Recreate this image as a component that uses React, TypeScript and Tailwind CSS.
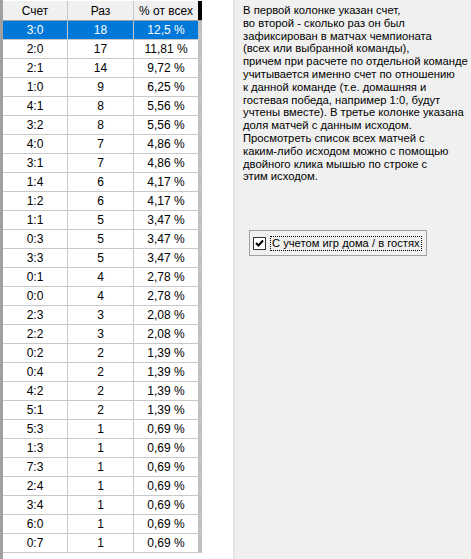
const rows: [string, string, string][] = [
  ["3:0", "18", "12,5 %"],
  ["2:0", "17", "11,81 %"],
  ["2:1", "14", "9,72 %"],
  ["1:0", "9", "6,25 %"],
  ["4:1", "8", "5,56 %"],
  ["3:2", "8", "5,56 %"],
  ["4:0", "7", "4,86 %"],
  ["3:1", "7", "4,86 %"],
  ["1:4", "6", "4,17 %"],
  ["1:2", "6", "4,17 %"],
  ["1:1", "5", "3,47 %"],
  ["0:3", "5", "3,47 %"],
  ["3:3", "5", "3,47 %"],
  ["0:1", "4", "2,78 %"],
  ["0:0", "4", "2,78 %"],
  ["2:3", "3", "2,08 %"],
  ["2:2", "3", "2,08 %"],
  ["0:2", "2", "1,39 %"],
  ["0:4", "2", "1,39 %"],
  ["4:2", "2", "1,39 %"],
  ["5:1", "2", "1,39 %"],
  ["5:3", "1", "0,69 %"],
  ["1:3", "1", "0,69 %"],
  ["7:3", "1", "0,69 %"],
  ["2:4", "1", "0,69 %"],
  ["3:4", "1", "0,69 %"],
  ["6:0", "1", "0,69 %"],
  ["0:7", "1", "0,69 %"],
];

const hint = [
  "В первой колонке указан счет,",
  "во второй - сколько раз он был",
  "зафиксирован в матчах чемпионата",
  "(всех или выбранной команды),",
  "причем при расчете по отдельной команде",
  "учитывается именно счет по отношению",
  "к данной команде (т.е. домашняя и",
  "гостевая победа, например 1:0, будут",
  "учтены вместе). В третье колонке указана",
  "доля матчей с данным исходом.",
  "Просмотреть список всех матчей с",
  "каким-либо исходом можно с помощью",
  "двойного клика мышью по строке с",
  "этим исходом.",
];

function ScoreGrid() {
  return (
    <div className="w-[235px] shrink-0 h-full bg-white border-l-[3px] border-l-[#a0a0a0] border-r-2 border-r-[#e3e3e3] flex flex-col">
      <div className="w-[199px] flex flex-col">
        <div className="flex h-[21px] bg-[#f0f0f0] border-t border-t-white border-b border-b-[#a0a0a0]">
          <div className="w-[65px] flex items-center justify-center border-r border-[#c8c8c8]">Счет</div>
          <div className="w-[66px] flex items-center justify-center border-r border-[#c8c8c8]">Раз</div>
          <div className="flex-1 flex items-center justify-center border-r-[4px] border-black">% от всех</div>
        </div>
        {rows.map((r, i) => (
          <div
            key={i}
            className={
              "flex h-[19px] border-b border-[#c8c8c8] " +
              (i === 0 ? "bg-[#0078d7] text-white" : "text-black")
            }
          >
            <div className="w-[65px] flex items-center justify-center border-r border-[#c8c8c8]">{r[0]}</div>
            <div className="w-[66px] flex items-center justify-center border-r border-[#c8c8c8]">{r[1]}</div>
            <div className="flex-1 flex items-center justify-center border-r-[4px] border-[#c0c0c0]">{r[2]}</div>
          </div>
        ))}
      </div>
    </div>
  );
}

export default function App() {
  return (
    <div
      className="w-[471px] h-[559px] flex bg-[#f0f0f0] text-[12px] overflow-hidden"
      style={{ fontFamily: '"Liberation Sans", Arial, sans-serif' }}
    >
      <ScoreGrid />
      <div className="flex-1 min-w-0 flex flex-col pl-[8px] pt-[4px]">
        <div className="text-black text-[11.25px] leading-[12.8px]">
          {hint.map((l, i) => (
            <div key={i} className="whitespace-nowrap">{l}</div>
          ))}
        </div>
        <div className="mt-[47px] ml-[6px] w-[178px] h-[26px] shrink-0 border border-[#a0a0a0] flex items-center gap-[4px] px-[3px]">
          <div className="w-[13px] h-[13px] shrink-0 border border-[#333] bg-white flex items-center justify-center">
            <svg width="9" height="9" viewBox="0 0 9 9">
              <path d="M1 4 L3.5 6.5 L8 1.5" stroke="#000" strokeWidth="2" fill="none" />
            </svg>
          </div>
          <span className="border border-dotted border-black px-[1px] text-[11.2px] leading-[13px] whitespace-nowrap">
            С учетом игр дома / в гостях
          </span>
        </div>
      </div>
    </div>
  );
}
